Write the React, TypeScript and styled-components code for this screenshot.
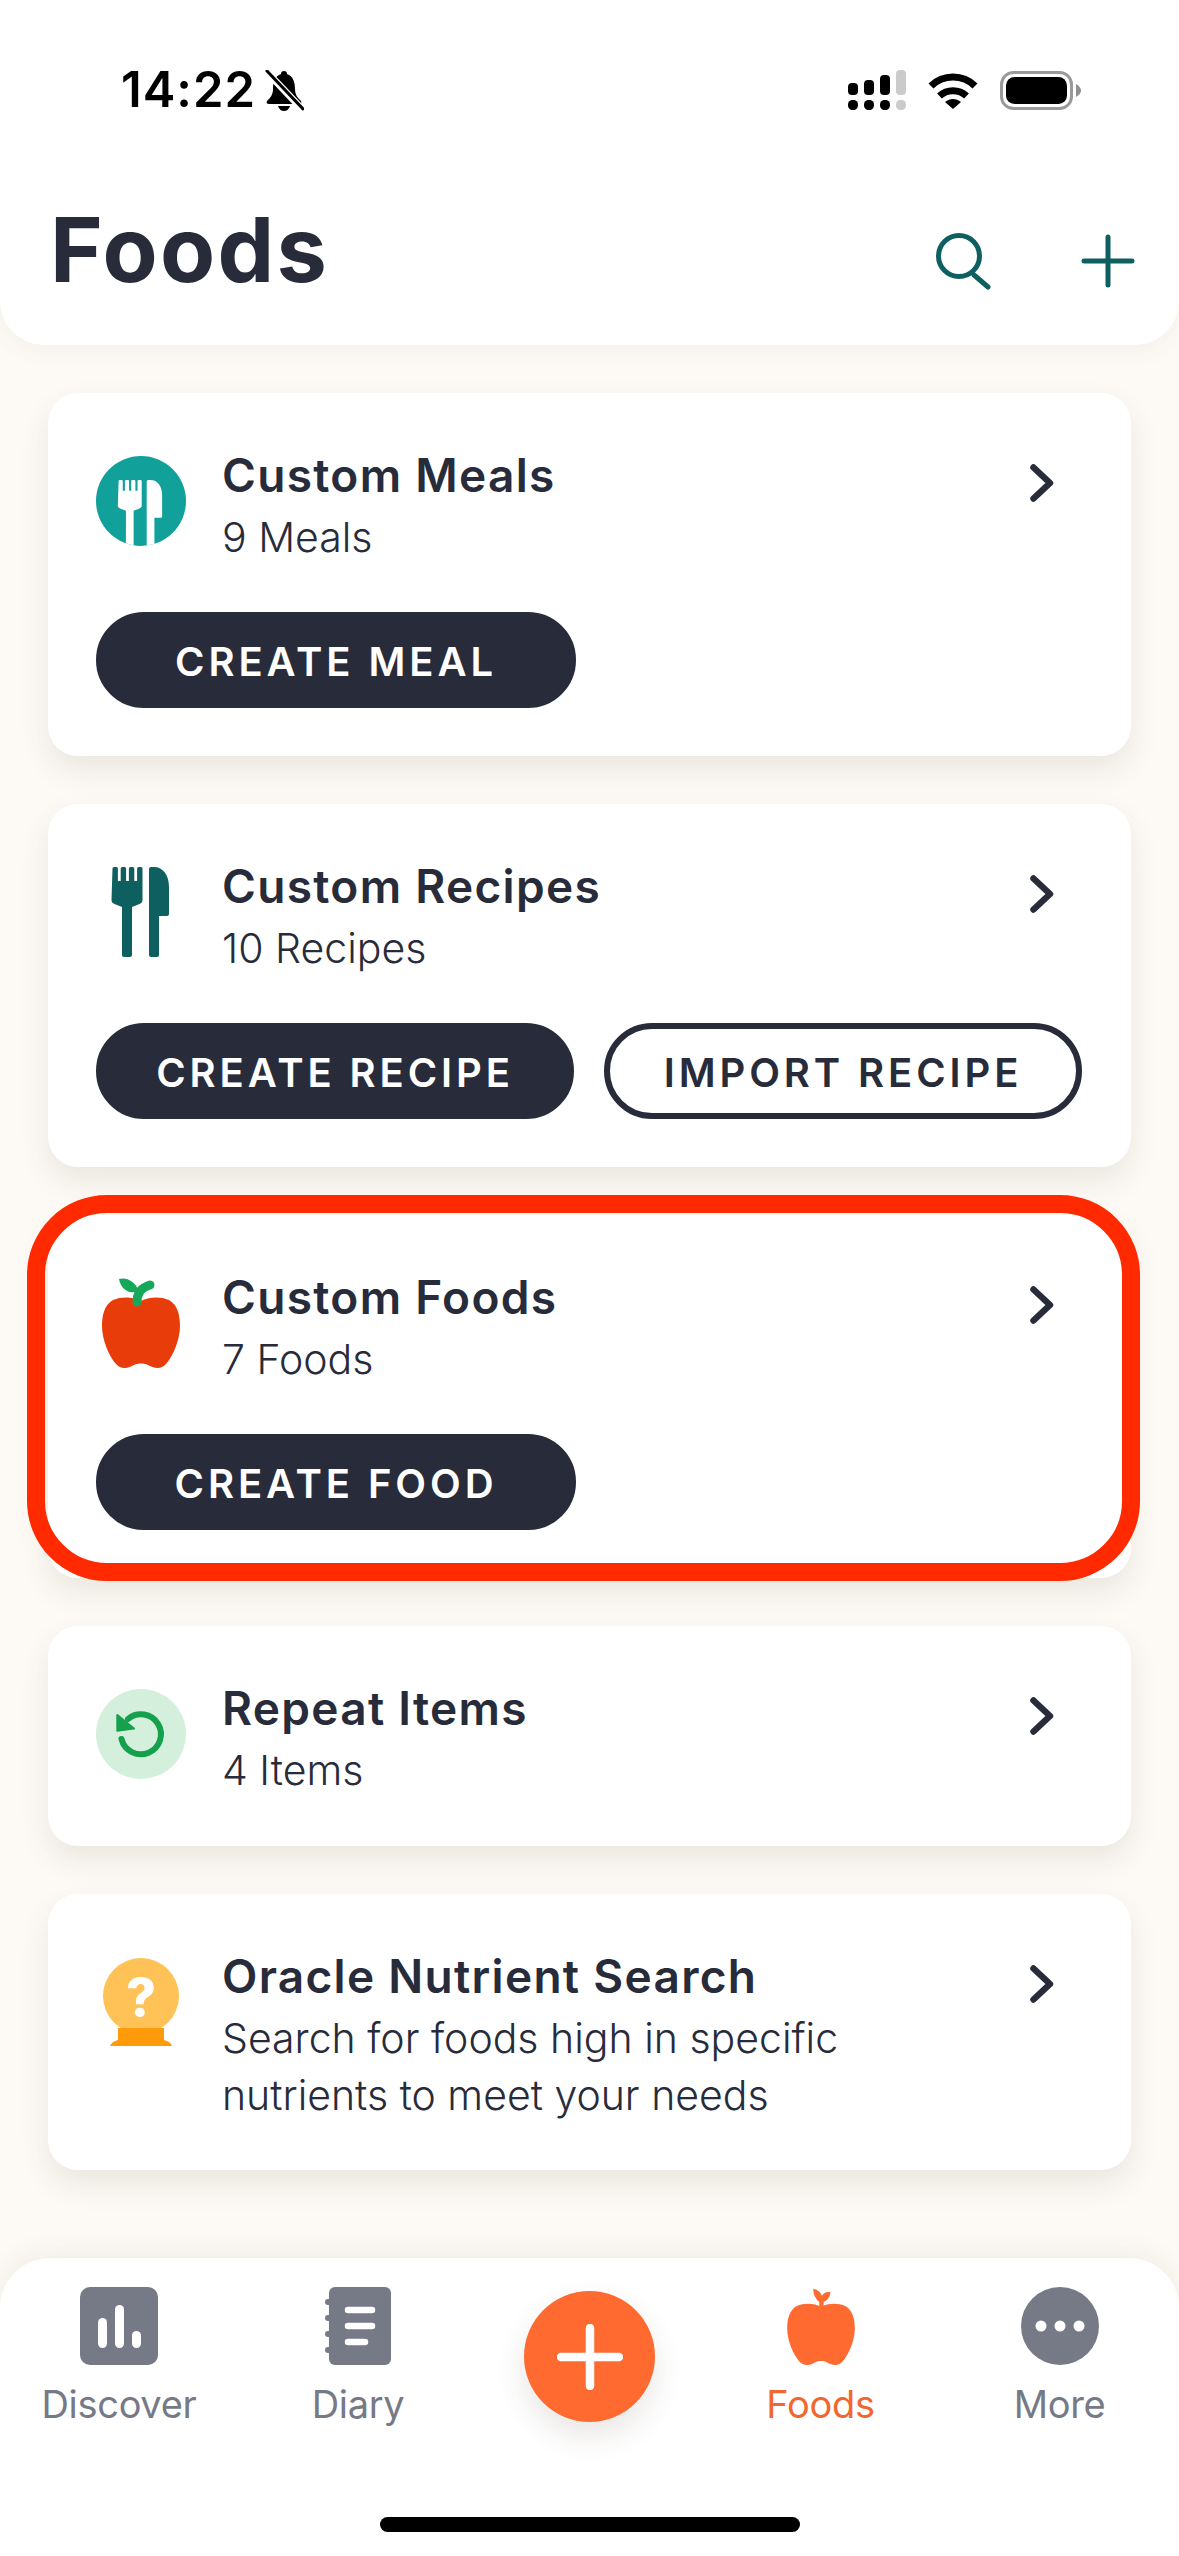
import React from 'react';
import styled, { createGlobalStyle } from 'styled-components';

const GlobalStyle = createGlobalStyle`
  html, body {
    margin: 0;
    padding: 0;
    background: #fdfaf5;
  }
  * {
    box-sizing: border-box;
  }
`;

const INK = '#282b3a';
const TEAL = '#0e5f5f';
const GREY = '#767986';
const ORANGE = '#ff6a30';

const APPLE_BODY =
  'M45 23C38 19 26 18 17 22C8 27 6 38 6 48C6 62 13 78 20 86C25 92 33 90 38 87C42 85 48 85 52 87C57 90 65 92 70 86C77 78 84 62 84 48C84 38 82 27 73 22C64 18 52 19 45 23Z';

const Cutlery: React.FC<{ color: string }> = ({ color }) => (
  <g fill={color}>
    <path d="M16.5 1.5a1.5 1.5 0 0 1 1.5-1.5h2.4a1.5 1.5 0 0 1 1.5 1.5V14h2.8V1.5A1.5 1.5 0 0 1 26.2 0h2.4a1.5 1.5 0 0 1 1.5 1.5V14h2.8V1.5A1.5 1.5 0 0 1 34.4 0h2.4a1.5 1.5 0 0 1 1.5 1.5V14h2.8V1.5A1.5 1.5 0 0 1 42.6 0h2.4a1.5 1.5 0 0 1 1.5 1.5V33c0 2-1 3-3 4l-7.5 3v48a2 2 0 0 1-2 2h-6a2 2 0 0 1-2-2V40l-7.5-3c-2-1-3-2-3-4z" />
    <path d="M53 2a2 2 0 0 1 2-2h3c9 0 15 8 15 20v27a2 2 0 0 1-2 2h-8v39a2 2 0 0 1-2 2h-6a2 2 0 0 1-2-2z" />
  </g>
);

const MealsIcon = () => (
  <IconSvg viewBox="0 0 90 90">
    <defs>
      <clipPath id="mealsClip">
        <circle cx="45" cy="45" r="45" />
      </clipPath>
    </defs>
    <circle cx="45" cy="45" r="45" fill="#12a19a" />
    <g clipPath="url(#mealsClip)">
      <g transform="translate(9.9 24) scale(0.77)">
        <Cutlery color="#ffffff" />
      </g>
    </g>
  </IconSvg>
);

const RecipesIcon = () => (
  <IconSvg viewBox="0 0 90 90">
    <Cutlery color={TEAL} />
  </IconSvg>
);

const FoodsIcon = () => (
  <IconSvg viewBox="0 0 90 90">
    <path d={APPLE_BODY} fill="#e83d0a" />
    <path d="M41 24C41 16 44 10 54 7" fill="none" stroke="#16a85a" strokeWidth="9" strokeLinecap="round" />
    <path d="M23 1C30-1 38 2 43 13C34 17 25 12 23 1Z" fill="#16a85a" />
  </IconSvg>
);

const RepeatIcon = () => (
  <IconSvg viewBox="0 0 90 90">
    <circle cx="45" cy="45" r="45" fill="#d4f0dd" />
    <path d="M32 30A20 20 0 1 1 25.5 50" fill="none" stroke="#15a04e" strokeWidth="6" strokeLinecap="round" />
    <path d="M21.3 26L38 39.5L21.3 41.7Z" fill="#15a04e" stroke="#15a04e" strokeWidth="2" strokeLinejoin="round" />
  </IconSvg>
);

const OracleIcon = () => (
  <IconSvg viewBox="0 0 90 90">
    <circle cx="45" cy="39" r="38" fill="#ffc257" />
    <path d="M22 71H68V83C72 84 75 86 76 89H14C15 86 18 84 22 83Z" fill="#ff9a0b" />
    <QuestionMark x="45" y="59" textAnchor="middle">
      ?
    </QuestionMark>
  </IconSvg>
);

const Chevron = () => (
  <ChevronSvg viewBox="0 0 24 38">
    <path d="M3.5 3.5L20 19L3.5 34.5" fill="none" stroke={INK} strokeWidth="6.5" strokeLinecap="round" strokeLinejoin="round" />
  </ChevronSvg>
);

interface CardData {
  title: string;
  lines: string[];
  icon: React.ReactNode;
  actions?: { label: string; width: number; outline?: boolean }[];
  highlighted?: boolean;
}

const cards: CardData[] = [
  {
    title: 'Custom Meals',
    lines: ['9 Meals'],
    icon: <MealsIcon />,
    actions: [{ label: 'CREATE MEAL', width: 480 }],
  },
  {
    title: 'Custom Recipes',
    lines: ['10 Recipes'],
    icon: <RecipesIcon />,
    actions: [
      { label: 'CREATE RECIPE', width: 478 },
      { label: 'IMPORT RECIPE', width: 478, outline: true },
    ],
  },
  {
    title: 'Custom Foods',
    lines: ['7 Foods'],
    icon: <FoodsIcon />,
    actions: [{ label: 'CREATE FOOD', width: 480 }],
    highlighted: true,
  },
  {
    title: 'Repeat Items',
    lines: ['4 Items'],
    icon: <RepeatIcon />,
  },
  {
    title: 'Oracle Nutrient Search',
    lines: ['Search for foods high in specific', 'nutrients to meet your needs'],
    icon: <OracleIcon />,
  },
];

const App: React.FC = () => {
  return (
    <Page>
      <GlobalStyle />
      <TopPanel>
        <StatusBar>
          <StatusLeft>
            <Clock>14:22</Clock>
            <svg width="39" height="41" viewBox="0 0 39 41">
              <path d="M19 1c-2 0-3 1-3 3C10 6 8 12 8 19c0 6-3 9-6 12-1 2 0 3 2 3h30c2 0 3-1 2-3-3-3-6-6-6-12 0-7-2-13-8-15 0-2-1-3-3-3z" fill="#000" />
              <path d="M13 36c1 3 3 5 6 5s5-2 6-5z" fill="#000" />
              <path d="M1 1L37 39" stroke="#fff" strokeWidth="7" />
              <path d="M2 1L38 39" stroke="#000" strokeWidth="3" strokeLinecap="round" />
            </svg>
          </StatusLeft>
          <StatusRight>
            <svg width="58" height="41" viewBox="0 0 58 41">
              <rect x="0" y="13" width="10" height="12" rx="4" fill="#000" />
              <rect x="16" y="10" width="10" height="15" rx="4" fill="#000" />
              <rect x="32" y="5" width="10" height="20" rx="4" fill="#000" />
              <rect x="48" y="0" width="10" height="25" rx="4" fill="#cbcbcb" />
              <rect x="0" y="30" width="10" height="10" rx="4.5" fill="#000" />
              <rect x="16" y="30" width="10" height="10" rx="4.5" fill="#000" />
              <rect x="32" y="30" width="10" height="10" rx="4.5" fill="#000" />
              <rect x="48" y="30" width="10" height="10" rx="4.5" fill="#cbcbcb" />
            </svg>
            <svg width="50" height="38" viewBox="0 0 50 38">
              <path d="M3 15C15 3 35 3 47 15" fill="none" stroke="#000" strokeWidth="7" />
              <path d="M11.5 25C19 18 31 18 38.500 25" fill="none" stroke="#000" strokeWidth="7" />
              <path d="M17 31C22 27 28 27 33 31L25 38Z" fill="#000" />
            </svg>
            <svg width="81" height="39" viewBox="0 0 81 39">
              <rect x="1.500" y="1.500" width="70" height="36" rx="12" fill="none" stroke="#9a9a9a" strokeWidth="3" />
              <rect x="6" y="6" width="61" height="27" rx="8.500" fill="#000" />
              <path d="M76 13q5 3 5 6.500t-5 6.500z" fill="#8f8f8f" />
            </svg>
          </StatusRight>
        </StatusBar>
        <Header>
          <PageTitle>Foods</PageTitle>
          <HeaderActions>
            <svg width="58" height="58" viewBox="0 0 58 58">
              <circle cx="24" cy="24" r="20.500" fill="none" stroke={TEAL} strokeWidth="5" />
              <path d="M39 43L53 55" fill="none" stroke={TEAL} strokeWidth="5" strokeLinecap="round" />
            </svg>
            <svg width="54" height="54" viewBox="0 0 54 54">
              <path d="M27 3V51M3 27H51" fill="none" stroke={TEAL} strokeWidth="5" strokeLinecap="round" />
            </svg>
          </HeaderActions>
        </Header>
      </TopPanel>

      <CardList>
        {cards.map((card) => (
          <Card key={card.title}>
            {card.highlighted && <HighlightRing />}
            <CardTop>
              <IconSlot>{card.icon}</IconSlot>
              <CardText>
                <CardTitle>{card.title}</CardTitle>
                {card.lines.map((line) => (
                  <CardLine key={line}>{line}</CardLine>
                ))}
              </CardText>
              <Chevron />
            </CardTop>
            {card.actions && (
              <ActionRow>
                {card.actions.map((action) => (
                  <PillButton key={action.label} $width={action.width} $outline={action.outline}>
                    {action.label}
                  </PillButton>
                ))}
              </ActionRow>
            )}
          </Card>
        ))}
      </CardList>

      <TabBar>
        <Tabs>
          <Tab>
            <svg width="78" height="78" viewBox="0 0 78 78">
              <rect width="78" height="78" rx="10" fill={GREY} />
              <rect x="18" y="31" width="9" height="30" rx="4.500" fill="#fff" />
              <rect x="35" y="18" width="9" height="43" rx="4.500" fill="#fff" />
              <rect x="52" y="44" width="9" height="17" rx="4.500" fill="#fff" />
            </svg>
            <TabLabel>Discover</TabLabel>
          </Tab>
          <Tab>
            <svg width="66" height="78" viewBox="0 0 66 78">
              <rect x="4" width="62" height="78" rx="6" fill={GREY} />
              <rect x="0" y="12" width="8" height="6" rx="3" fill={GREY} />
              <rect x="0" y="28" width="8" height="6" rx="3" fill={GREY} />
              <rect x="0" y="44" width="8" height="6" rx="3" fill={GREY} />
              <rect x="0" y="60" width="8" height="6" rx="3" fill={GREY} />
              <path d="M23 23H47M23 39H47M23 55H40" stroke="#fff" strokeWidth="6.500" strokeLinecap="round" />
            </svg>
            <TabLabel>Diary</TabLabel>
          </Tab>
          <Tab>
            <AddButton>
              <svg width="66" height="66" viewBox="0 0 66 66">
                <path d="M33 4V62M4 33H62" stroke="#fff" strokeWidth="8.500" strokeLinecap="round" />
              </svg>
            </AddButton>
          </Tab>
          <Tab>
            <svg width="78" height="78" viewBox="0 0 90 90">
              <path d={APPLE_BODY} fill={ORANGE} />
              <path d="M36 2C42 3 45 7 46 10C48 7 51 5 56 6C55 12 52 16 48 17V25H43V17C39 14 36 9 36 2Z" fill={ORANGE} />
            </svg>
            <TabLabel $active>Foods</TabLabel>
          </Tab>
          <Tab>
            <svg width="78" height="78" viewBox="0 0 78 78">
              <circle cx="39" cy="39" r="39" fill={GREY} />
              <circle cx="20" cy="39" r="5.500" fill="#fff" />
              <circle cx="39" cy="39" r="5.500" fill="#fff" />
              <circle cx="58" cy="39" r="5.500" fill="#fff" />
            </svg>
            <TabLabel>More</TabLabel>
          </Tab>
        </Tabs>
        <HomeIndicator />
      </TabBar>
    </Page>
  );
};

export default App;

const Page = styled.div`
  width: 1179px;
  height: 2556px;
  display: flex;
  flex-direction: column;
  overflow: hidden;
  background: #fdfaf5;
  font-family: 'Inter', 'Liberation Sans', sans-serif;
  color: ${INK};
`;

const TopPanel = styled.header`
  height: 345px;
  flex: none;
  padding-top: 60px;
  background: #ffffff;
  border-radius: 0 0 44px 44px;
  box-shadow: 0 6px 24px rgba(70, 60, 40, 0.05);
`;

const StatusBar = styled.div`
  height: 60px;
  display: flex;
  align-items: center;
  justify-content: space-between;
  padding: 0 98px 0 121px;
`;

const StatusLeft = styled.div`
  display: flex;
  align-items: center;
  gap: 9px;
`;

const Clock = styled.span`
  font-size: 49px;
  font-weight: 600;
  line-height: 60px;
  letter-spacing: 1px;
  color: #000000;
`;

const StatusRight = styled.div`
  display: flex;
  align-items: center;
  gap: 22px;
`;

const Header = styled.div`
  margin-top: 80px;
  height: 100px;
  display: flex;
  align-items: center;
  justify-content: space-between;
  padding: 0 44px 0 50px;
`;

const PageTitle = styled.h1`
  margin: 0;
  font-size: 90px;
  font-weight: 700;
  line-height: 100px;
  letter-spacing: 2.3px;
`;

const HeaderActions = styled.div`
  display: flex;
  align-items: center;
  gap: 88px;
  margin-top: 22px;
`;

const CardList = styled.main`
  flex: 1;
  display: flex;
  flex-direction: column;
  gap: 48px;
  padding: 48px 48px 0;
`;

const Card = styled.section`
  position: relative;
  padding: 54px 48px 47px;
  background: #ffffff;
  border-radius: 30px;
  box-shadow: 0 14px 30px rgba(70, 60, 40, 0.1);
`;

const HighlightRing = styled.div`
  position: absolute;
  top: -20px;
  left: -21px;
  right: -9px;
  bottom: -3px;
  border: 18px solid #ff2a00;
  border-radius: 80px;
  pointer-events: none;
`;

const CardTop = styled.div`
  display: flex;
  align-items: flex-start;
  gap: 36px;
`;

const IconSlot = styled.div`
  width: 90px;
  height: 90px;
  margin-top: 9px;
  flex: none;
`;

const IconSvg = styled.svg`
  display: block;
  width: 90px;
  height: 90px;
  overflow: visible;
`;

const QuestionMark = styled.text`
  font-family: 'Inter', 'Liberation Sans', sans-serif;
  font-size: 52px;
  font-weight: 800;
  fill: #ffffff;
`;

const CardText = styled.div`
  flex: 1;
  min-width: 0;
`;

const CardTitle = styled.h2`
  margin: 0 0 6px;
  font-size: 46px;
  font-weight: 600;
  line-height: 56px;
  letter-spacing: 1.3px;
`;

const CardLine = styled.div`
  font-size: 41px;
  font-weight: 300;
  line-height: 57px;

  & + & {
    line-height: 56px;
  }
`;

const ChevronSvg = styled.svg`
  width: 24px;
  height: 38px;
  flex: none;
  margin: 17px 29px 0 0;
`;

const ActionRow = styled.div`
  display: flex;
  gap: 30px;
  margin-top: 46px;
  padding-bottom: 1px;
`;

const PillButton = styled.div<{ $width: number; $outline?: boolean }>`
  width: ${(p) => p.$width}px;
  height: 96px;
  padding-top: 2px;
  display: flex;
  align-items: center;
  justify-content: center;
  border-radius: 48px;
  border: 6px solid ${INK};
  background: ${(p) => (p.$outline ? '#ffffff' : INK)};
  color: ${(p) => (p.$outline ? INK : '#ffffff')};
  font-size: 40px;
  font-weight: 600;
  letter-spacing: 3.9px;
  white-space: nowrap;
`;

const TabBar = styled.nav`
  height: 298px;
  flex: none;
  padding-top: 29px;
  display: flex;
  flex-direction: column;
  align-items: center;
  background: #ffffff;
  border-radius: 50px 50px 0 0;
  box-shadow: 0 -8px 24px rgba(70, 60, 40, 0.06);
`;

const Tabs = styled.div`
  width: 100%;
  height: 230px;
  display: grid;
  grid-template-columns: 238px 240px 223px 239px 239px;
`;

const Tab = styled.div`
  display: flex;
  flex-direction: column;
  align-items: center;
`;

const TabLabel = styled.span<{ $active?: boolean }>`
  margin-top: 17px;
  font-size: 38px;
  font-weight: 400;
  line-height: 44px;
  letter-spacing: -0.3px;
  color: ${(p) => (p.$active ? '#f0672f' : GREY)};
`;

const AddButton = styled.div`
  width: 131px;
  height: 131px;
  margin-top: 4px;
  display: flex;
  align-items: center;
  justify-content: center;
  border-radius: 50%;
  background: ${ORANGE};
  box-shadow: 0 14px 30px rgba(70, 60, 40, 0.12);
`;

const HomeIndicator = styled.div`
  width: 420px;
  height: 15px;
  border-radius: 8px;
  background: #000000;
`;
